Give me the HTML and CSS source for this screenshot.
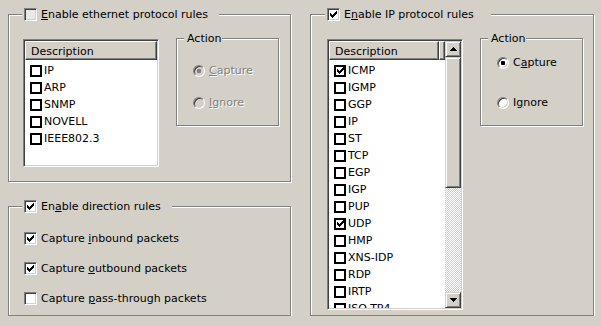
FILE: index.html
```html
<!DOCTYPE html>
<html lang="en">
<head>
    <meta charset="UTF-8">
    <title>Capture rules</title>
    <link rel="stylesheet" href="styles.css">
</head>
<body>
    <div class="dialog">
        <div class="column">
            <fieldset class="group group-ethernet">
                <legend class="group-title">
                    <span class="check check-pushed"></span>
                    <span><u>E</u>nable ethernet protocol rules</span>
                </legend>
                <div class="group-body">
                    <div class="listview listview-short">
                        <div class="list-main">
                            <div class="list-header">
                                <div class="header-cell header-full">Description</div>
                            </div>
                            <ul class="list-rows">
                                <li><span class="state-box"></span>IP</li>
                                <li><span class="state-box"></span>ARP</li>
                                <li><span class="state-box"></span>SNMP</li>
                                <li><span class="state-box"></span>NOVELL</li>
                                <li><span class="state-box"></span>IEEE802.3</li>
                            </ul>
                        </div>
                    </div>
                    <fieldset class="action action-disabled">
                        <legend class="action-title">Action</legend>
                        <div class="action-body">
                            <div class="radio-row"><span class="radio radio-on"></span><span class="radio-text"><u>C</u>apture</span></div>
                            <div class="radio-row"><span class="radio"></span><span class="radio-text"><u>I</u>gnore</span></div>
                        </div>
                    </fieldset>
                </div>
            </fieldset>

            <fieldset class="group group-direction">
                <legend class="group-title">
                    <span class="check"><svg class="tick" viewBox="0 0 7 7"><path d="M6 0h1v1h-1zM5 1h2v1h-2zM0 2h1v1h-1zM4 2h3v1h-3zM0 3h2v1h-2zM3 3h3v1h-3zM0 4h5v1h-5zM1 5h3v1h-3zM2 6h1v1h-1z"/></svg></span>
                    <span>En<u>a</u>ble direction rules</span>
                </legend>
                <div class="direction-body">
                    <div class="check-row">
                        <span class="check"><svg class="tick" viewBox="0 0 7 7"><path d="M6 0h1v1h-1zM5 1h2v1h-2zM0 2h1v1h-1zM4 2h3v1h-3zM0 3h2v1h-2zM3 3h3v1h-3zM0 4h5v1h-5zM1 5h3v1h-3zM2 6h1v1h-1z"/></svg></span>
                        <span>Capture <u>i</u>nbound packets</span>
                    </div>
                    <div class="check-row">
                        <span class="check"><svg class="tick" viewBox="0 0 7 7"><path d="M6 0h1v1h-1zM5 1h2v1h-2zM0 2h1v1h-1zM4 2h3v1h-3zM0 3h2v1h-2zM3 3h3v1h-3zM0 4h5v1h-5zM1 5h3v1h-3zM2 6h1v1h-1z"/></svg></span>
                        <span>Capture <u>o</u>utbound packets</span>
                    </div>
                    <div class="check-row">
                        <span class="check"></span>
                        <span>Capture <u>p</u>ass-through packets</span>
                    </div>
                </div>
            </fieldset>
        </div>

        <fieldset class="group group-ip">
            <legend class="group-title group-title-wide">
                <span class="check"><svg class="tick" viewBox="0 0 7 7"><path d="M6 0h1v1h-1zM5 1h2v1h-2zM0 2h1v1h-1zM4 2h3v1h-3zM0 3h2v1h-2zM3 3h3v1h-3zM0 4h5v1h-5zM1 5h3v1h-3zM2 6h1v1h-1z"/></svg></span>
                <span>E<u>n</u>able IP protocol rules</span>
            </legend>
            <div class="group-body group-body-ip">
                <div class="listview listview-tall">
                    <div class="list-main">
                        <div class="list-header">
                            <div class="header-cell header-fixed">Description</div>
                            <div class="header-cell header-filler"></div>
                        </div>
                        <ul class="list-rows">
                            <li><span class="state-box"><svg class="tick" viewBox="0 0 7 7"><path d="M6 0h1v1h-1zM5 1h2v1h-2zM0 2h1v1h-1zM4 2h3v1h-3zM0 3h2v1h-2zM3 3h3v1h-3zM0 4h5v1h-5zM1 5h3v1h-3zM2 6h1v1h-1z"/></svg></span>ICMP</li>
                            <li><span class="state-box"></span>IGMP</li>
                            <li><span class="state-box"></span>GGP</li>
                            <li><span class="state-box"></span>IP</li>
                            <li><span class="state-box"></span>ST</li>
                            <li><span class="state-box"></span>TCP</li>
                            <li><span class="state-box"></span>EGP</li>
                            <li><span class="state-box"></span>IGP</li>
                            <li><span class="state-box"></span>PUP</li>
                            <li><span class="state-box"><svg class="tick" viewBox="0 0 7 7"><path d="M6 0h1v1h-1zM5 1h2v1h-2zM0 2h1v1h-1zM4 2h3v1h-3zM0 3h2v1h-2zM3 3h3v1h-3zM0 4h5v1h-5zM1 5h3v1h-3zM2 6h1v1h-1z"/></svg></span>UDP</li>
                            <li><span class="state-box"></span>HMP</li>
                            <li><span class="state-box"></span>XNS-IDP</li>
                            <li><span class="state-box"></span>RDP</li>
                            <li><span class="state-box"></span>IRTP</li>
                            <li><span class="state-box"></span>ISO-TP4</li>
                        </ul>
                    </div>
                    <div class="scrollbar">
                        <div class="scroll-btn"><svg class="arrow" viewBox="0 0 7 4"><path d="M3 0h1v1h-1zM2 1h3v1h-3zM1 2h5v1h-5zM0 3h7v1h-7z"/></svg></div>
                        <div class="scroll-thumb"></div>
                        <div class="scroll-track"></div>
                        <div class="scroll-btn"><svg class="arrow" viewBox="0 0 7 4"><path d="M0 0h7v1h-7zM1 1h5v1h-5zM2 2h3v1h-3zM3 3h1v1h-1z"/></svg></div>
                    </div>
                </div>
                <fieldset class="action">
                    <legend class="action-title">Action</legend>
                    <div class="action-body action-body-ip">
                        <div class="radio-row"><span class="radio radio-on"></span><span class="radio-text">C<u>a</u>pture</span></div>
                        <div class="radio-row"><span class="radio"></span><span class="radio-text">I<u>g</u>nore</span></div>
                    </div>
                </fieldset>
            </div>
        </fieldset>
    </div>
</body>
</html>
```

FILE: styles.css
```css
body {
    margin: 0;
    background-color: #d4d0c8;
    font-family: 'DejaVu Sans', Tahoma, sans-serif;
    font-size: 11px;
    line-height: 13px;
    color: #000000;
}
.dialog {
    display: flex;
    align-items: flex-start;
    gap: 19px;
    padding: 8px 0 0 8px;
}
.column {
    display: flex;
    flex-direction: column;
    gap: 18px;
    width: 283px;
}

/* etched group boxes */
.group,
.action {
    margin: 0;
    padding: 0;
    min-width: 0;
    box-sizing: border-box;
    border: 1px solid #808080;
    box-shadow: 1px 1px 0 #ffffff, inset 1px 1px 0 #ffffff;
}
.group-ethernet {
    height: 174px;
}
.group-direction {
    height: 116px;
}
.group-ip {
    width: 284px;
    height: 308px;
}
.group-title {
    display: flex;
    align-items: center;
    gap: 4px;
    margin-left: 13px;
    padding: 0 11px 0 2px;
    background-color: #d4d0c8;
}
.group-title-wide {
    margin-left: 14px;
    padding-right: 17px;
}
.group-body {
    display: flex;
    align-items: flex-start;
    gap: 17px;
    padding: 11px 0 0 14px;
}
.group-body-ip {
    padding-left: 16px;
}

/* classic 3d checkbox */
.check {
    width: 13px;
    height: 13px;
    box-sizing: border-box;
    flex: none;
    display: flex;
    align-items: center;
    justify-content: center;
    background-color: #ffffff;
    border: 1px solid;
    border-color: #808080 #ffffff #ffffff #808080;
    box-shadow: inset 1px 1px 0 #404040, inset -1px -1px 0 #d4d0c8;
}
.check-pushed {
    background-color: #ebe9e5;
}
.tick {
    width: 7px;
    height: 7px;
    fill: #000000;
    shape-rendering: crispEdges;
}

/* list view */
.listview {
    margin-top: 7px;
    width: 136px;
    box-sizing: border-box;
    display: flex;
    overflow: hidden;
    background-color: #ffffff;
    border: 1px solid;
    border-color: #808080 #ffffff #ffffff #808080;
    box-shadow: inset 1px 1px 0 #404040, inset -1px -1px 0 #d4d0c8;
    padding: 1px;
}
.listview-short {
    height: 128px;
}
.listview-tall {
    height: 271px;
}
.list-main {
    flex: 1;
    min-width: 0;
    overflow: hidden;
}
.list-header {
    display: flex;
    height: 19px;
}
.header-cell {
    box-sizing: border-box;
    height: 19px;
    padding: 3px 0 0 5px;
    background-color: #d4d0c8;
    border: 1px solid;
    border-color: #ffffff #404040 #404040 #ffffff;
    box-shadow: inset -1px -1px 0 #808080;
    white-space: nowrap;
}
.header-full {
    flex: 1;
}
.header-fixed {
    width: 110px;
    flex: none;
}
.header-filler {
    flex: 1;
    padding: 0;
}
.list-rows {
    list-style: none;
    margin: 0;
    padding: 2px 0 0 5px;
}
.list-rows li {
    display: flex;
    align-items: center;
    gap: 2px;
    height: 17px;
    white-space: nowrap;
}
.state-box {
    width: 12px;
    height: 12px;
    box-sizing: border-box;
    flex: none;
    display: flex;
    align-items: center;
    justify-content: center;
    border: 2px solid #000000;
    background-color: #ffffff;
}

/* scrollbar */
.scrollbar {
    width: 16px;
    flex: none;
    display: flex;
    flex-direction: column;
}
.scroll-btn,
.scroll-thumb {
    box-sizing: border-box;
    background-color: #d4d0c8;
    border: 1px solid;
    border-color: #d4d0c8 #404040 #404040 #d4d0c8;
    box-shadow: inset 1px 1px 0 #ffffff, inset -1px -1px 0 #808080;
}
.scroll-btn {
    height: 16px;
    display: flex;
    align-items: center;
    justify-content: center;
}
.scroll-thumb {
    height: 131px;
}
.scroll-track {
    flex: 1;
    background: repeating-conic-gradient(#ffffff 0 25%, #d4d0c8 0 50%) 0 0 / 2px 2px;
}
.arrow {
    width: 7px;
    height: 4px;
    fill: #000000;
    shape-rendering: crispEdges;
}

/* action boxes */
.action {
    width: 103px;
    height: 94px;
    flex: none;
}
.action-title {
    margin-left: 7px;
    padding: 0 1px 0 3px;
    background-color: #d4d0c8;
}
.action-body {
    display: flex;
    flex-direction: column;
    gap: 19px;
    padding: 19px 0 0 16px;
}
.action-body-ip {
    gap: 27px;
    padding-top: 11px;
}
.radio-row {
    display: flex;
    align-items: center;
    gap: 4px;
    height: 13px;
}
.radio {
    width: 12px;
    height: 12px;
    box-sizing: border-box;
    flex: none;
    display: flex;
    align-items: center;
    justify-content: center;
    border-radius: 50%;
    background-color: #ffffff;
    border: 1px solid;
    border-color: #808080 #ffffff #ffffff #808080;
    box-shadow: inset 1px 1px 0 #404040, inset -1px -1px 0 #d4d0c8;
}
.radio-on::after {
    content: '';
    width: 4px;
    height: 4px;
    border-radius: 1px;
    background-color: #000000;
}
.action-disabled .radio {
    background-color: #d4d0c8;
}
.action-disabled .radio-on::after {
    background-color: #808080;
}
.action-disabled .radio-text {
    color: #808080;
    text-shadow: 1px 1px 0 #ffffff;
}

/* direction rules */
.direction-body {
    display: flex;
    flex-direction: column;
    gap: 17px;
    padding: 19px 0 0 15px;
}
.check-row {
    display: flex;
    align-items: center;
    gap: 4px;
    height: 13px;
    white-space: nowrap;
}
```
